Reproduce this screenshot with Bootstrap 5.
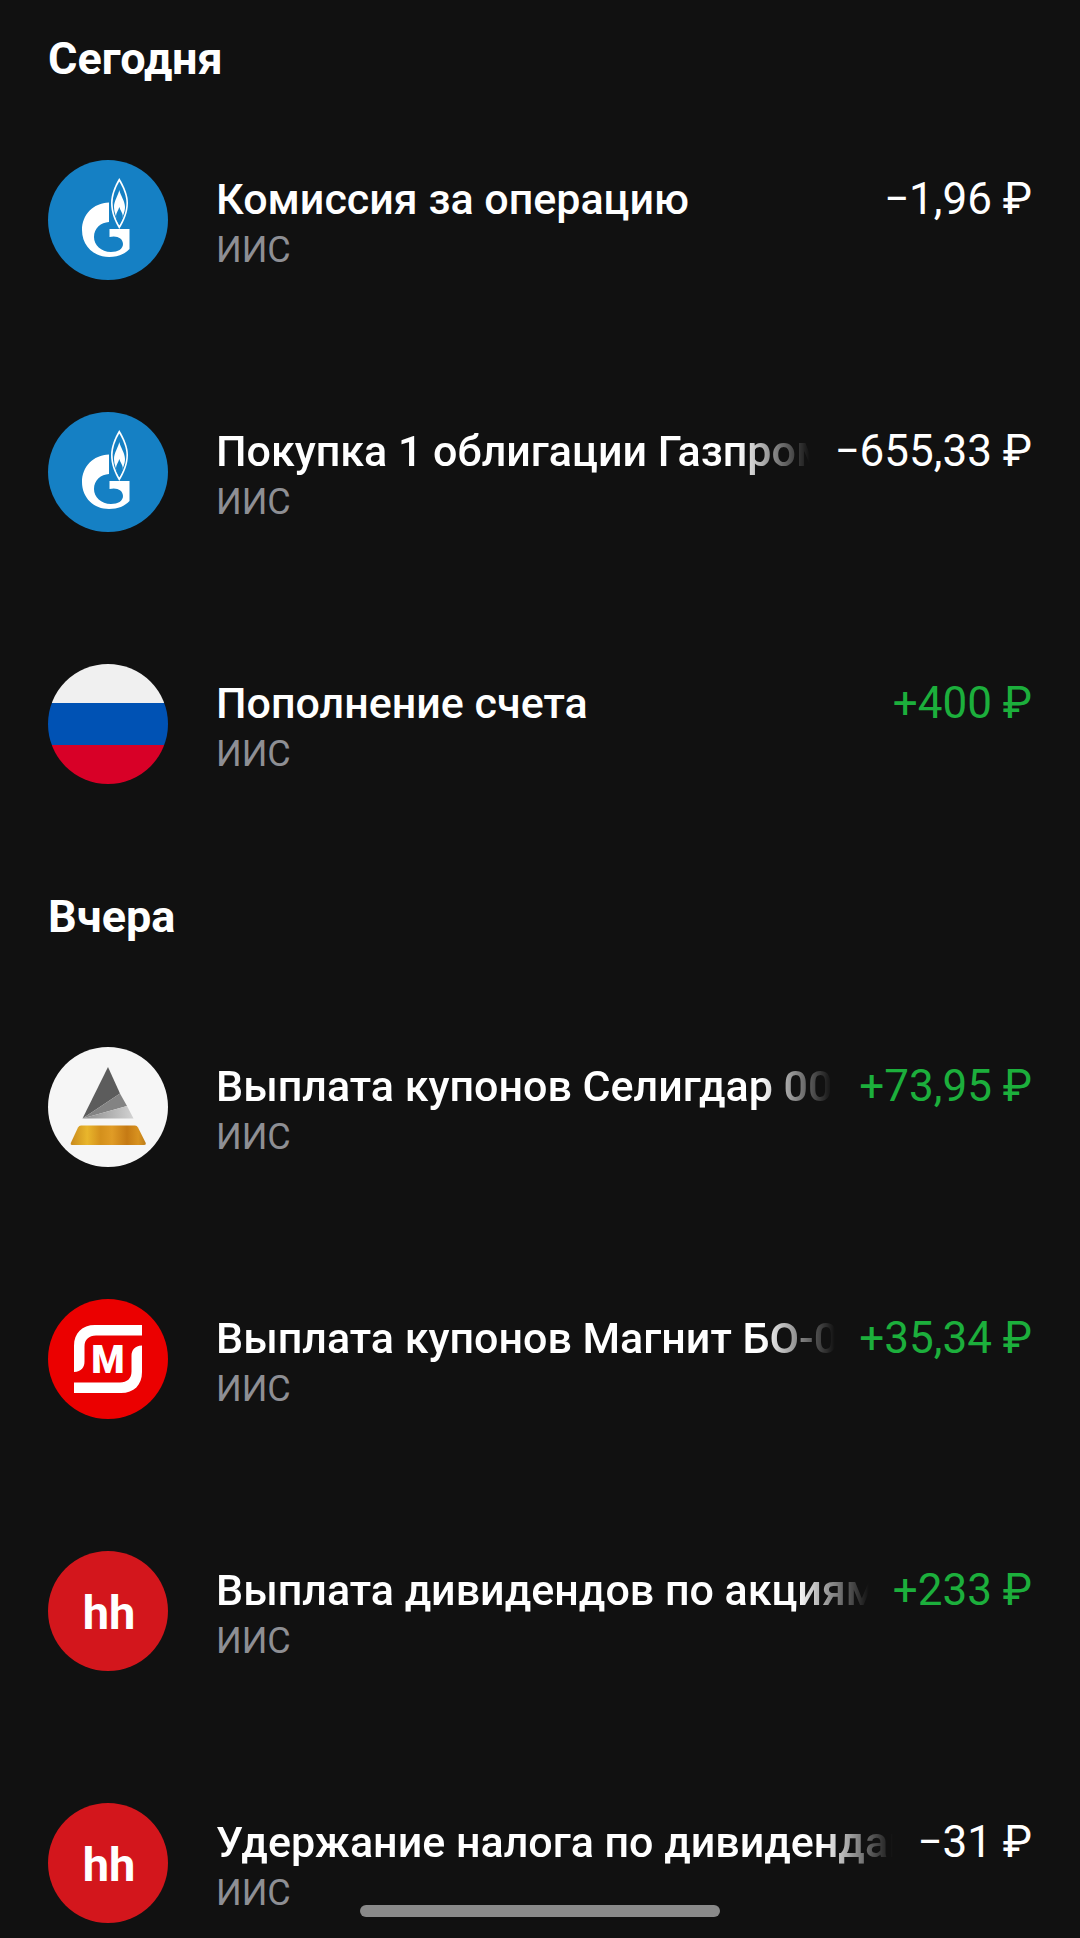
<!DOCTYPE html>
<html lang="ru" data-bs-theme="dark">
<head>
<meta charset="utf-8">
<meta name="viewport" content="width=device-width, initial-scale=1">
<title>Операции</title>
<link href="https://cdn.jsdelivr.net/npm/bootstrap@5.3.0/dist/css/bootstrap.min.css" rel="stylesheet">
<style>
body { background: #111; color: #fff; font-family: Roboto, "Noto Sans", sans-serif; }
.feed { padding: 0 48px; }
.day-title { font-size: 45px; line-height: 52px; font-weight: 700; padding: 41px 0 38px; }
.day-title-first { padding: 33px 0 9px; }
.operation { gap: 48px; padding: 66px 0; }
.operation-last { padding-bottom: 0; }
.logo { width: 120px; height: 120px; }
.info { padding-top: 13px; }
.op-line { gap: 24px; line-height: 52px; }
.op-name { font-size: 43px; font-weight: 500; min-width: 0; }
.op-name-cut { -webkit-mask-image: linear-gradient(to left, transparent, #000 72px); mask-image: linear-gradient(to left, transparent, #000 72px); }
.op-sum { font-size: 44px; }
.income { color: #1caf3c; }
.account { font-size: 36px; line-height: 50px; color: #8e8f94; }
.home-bar { width: 360px; height: 12px; background: #8a8a8a; bottom: 21px; }
</style>
<script src="https://cdn.jsdelivr.net/npm/bootstrap@5.3.0/dist/js/bootstrap.bundle.min.js" defer></script>
</head>
<body>
<svg class="d-none" xmlns="http://www.w3.org/2000/svg">
  <symbol id="gazprom" viewBox="0 0 120 120">
    <circle cx="60" cy="60" r="60" fill="#1580c4"/>
    <path fill="#fff" d="M61 42.500C45 43 34 55 34 70c0 16 12 27 27 27 9 0 16-3 20.500-8V69H61.500v8c7-2 13.500 1 13.500 7 0 5-5 8-12 8-10 0-17-7-17-15 0-9 7-14.500 15-15z"/>
    <path fill="#fff" d="M71.300 18C66 27 63 35 63 43c0 9 3 17 8.300 26C76.600 60 80 52 80 43c0-8-3.400-16-8.700-25z"/>
    <path fill="#1580c4" d="M71.300 21.500C67 29 64.600 36 64.600 43c0 8 2.400 15 6.700 22.500C75.600 58 78.400 51 78.400 43c0-7-2.800-14-7.100-21.500z"/>
    <path fill="#fff" d="M71.300 30c-1 5-5.300 11-5.300 17 0 5 2.300 11 5.300 16.500C74.300 58 77 52 77 47c0-6-4.700-12-5.700-17z"/>
    <path fill="#1580c4" d="M71.300 47c-.7 3-3.300 6-3.300 9 0 3 1.600 6 3.300 9 1.700-3 3.500-6 3.500-9 0-3-2.800-6-3.500-9z"/>
  </symbol>
  <symbol id="hh" viewBox="0 0 120 120">
    <circle cx="60" cy="60" r="60" fill="#d3161c"/>
    <text x="61" y="78" text-anchor="middle" font-size="47" font-weight="700" fill="#fff">hh</text>
  </symbol>
</svg>

<main class="feed">
  <section>
    <h2 class="day-title day-title-first m-0">Сегодня</h2>
    <ul class="list-unstyled m-0">
      <li class="operation d-flex align-items-start">
        <svg class="logo flex-shrink-0" aria-hidden="true"><use href="#gazprom"/></svg>
        <div class="info flex-fill overflow-hidden">
          <div class="op-line d-flex justify-content-between">
            <span class="op-name text-nowrap overflow-hidden">Комиссия за операцию</span>
            <span class="op-sum text-nowrap">−1,96 ₽</span>
          </div>
          <div class="account">ИИС</div>
        </div>
      </li>
      <li class="operation d-flex align-items-start">
        <svg class="logo flex-shrink-0" aria-hidden="true"><use href="#gazprom"/></svg>
        <div class="info flex-fill overflow-hidden">
          <div class="op-line d-flex justify-content-between">
            <span class="op-name op-name-cut text-nowrap overflow-hidden">Покупка 1 облигации Газпром</span>
            <span class="op-sum text-nowrap">−655,33 ₽</span>
          </div>
          <div class="account">ИИС</div>
        </div>
      </li>
      <li class="operation d-flex align-items-start">
        <svg class="logo flex-shrink-0 rounded-circle" viewBox="0 0 120 120" aria-hidden="true">
          <path fill="#f0f0f0" d="M0 0h120v39H0z"/><path fill="#0052b4" d="M0 39h120v42H0z"/><path fill="#d80027" d="M0 81h120v39H0z"/>
        </svg>
        <div class="info flex-fill overflow-hidden">
          <div class="op-line d-flex justify-content-between">
            <span class="op-name text-nowrap overflow-hidden">Пополнение счета</span>
            <span class="op-sum income text-nowrap">+400 ₽</span>
          </div>
          <div class="account">ИИС</div>
        </div>
      </li>
    </ul>
  </section>
  <section>
    <h2 class="day-title m-0">Вчера</h2>
    <ul class="list-unstyled m-0">
      <li class="operation d-flex align-items-start">
        <svg class="logo flex-shrink-0" viewBox="0 0 120 120" aria-hidden="true">
          <defs>
            <linearGradient id="gold">
              <stop offset="0" stop-color="#c98a1c"/><stop offset=".22" stop-color="#e9b62c"/><stop offset=".4" stop-color="#d4901c"/>
              <stop offset=".55" stop-color="#e09c26"/><stop offset=".75" stop-color="#c57a14"/><stop offset=".9" stop-color="#d8921f"/><stop offset="1" stop-color="#bd7d1a"/>
            </linearGradient>
            <linearGradient id="steel"><stop offset="0" stop-color="#8a8a8a"/><stop offset="1" stop-color="#d2d2d2"/></linearGradient>
          </defs>
          <circle cx="60" cy="60" r="60" fill="#f6f6f6"/>
          <path fill="#5c5c5c" d="M60 20 34.500 71.500 72 46.500z"/>
          <path fill="#838383" d="M72 46.500 34.500 71.500 79 59z"/>
          <path fill="url(#steel)" d="M79 59 34.500 71.500h51z"/>
          <path fill="url(#gold)" d="M33 78.500h54q2 0 3 2l7.500 15q1 2.500-1.500 2.500H24q-2 0-1-2.500l7-15q1-2 3-2z"/>
        </svg>
        <div class="info flex-fill overflow-hidden">
          <div class="op-line d-flex justify-content-between">
            <span class="op-name op-name-cut text-nowrap overflow-hidden">Выплата купонов Селигдар 00</span>
            <span class="op-sum income text-nowrap">+73,95 ₽</span>
          </div>
          <div class="account">ИИС</div>
        </div>
      </li>
      <li class="operation d-flex align-items-start">
        <svg class="logo flex-shrink-0" viewBox="0 0 120 120" aria-hidden="true">
          <circle cx="60" cy="60" r="60" fill="#eb0000"/>
          <path fill="#fff" d="M94 26v10.500H48c-7 0-11.500 4-11.500 11v15c0 6-3 10-10.500 10.500V47c0-13 8-21 21-21z"/>
          <path fill="#fff" d="M26 94V83.500h46c7 0 11.500-4 11.500-11V57c0-6 3-10 10.500-10.500V73c0 13-8 21-21 21z"/>
          <text x="60" y="74" text-anchor="middle" font-size="38" font-weight="900" fill="#fff">M</text>
        </svg>
        <div class="info flex-fill overflow-hidden">
          <div class="op-line d-flex justify-content-between">
            <span class="op-name op-name-cut text-nowrap overflow-hidden">Выплата купонов Магнит БО-0</span>
            <span class="op-sum income text-nowrap">+35,34 ₽</span>
          </div>
          <div class="account">ИИС</div>
        </div>
      </li>
      <li class="operation d-flex align-items-start">
        <svg class="logo flex-shrink-0" aria-hidden="true"><use href="#hh"/></svg>
        <div class="info flex-fill overflow-hidden">
          <div class="op-line d-flex justify-content-between">
            <span class="op-name op-name-cut text-nowrap overflow-hidden">Выплата дивидендов по акциям</span>
            <span class="op-sum income text-nowrap">+233 ₽</span>
          </div>
          <div class="account">ИИС</div>
        </div>
      </li>
      <li class="operation operation-last d-flex align-items-start">
        <svg class="logo flex-shrink-0" aria-hidden="true"><use href="#hh"/></svg>
        <div class="info flex-fill overflow-hidden">
          <div class="op-line d-flex justify-content-between">
            <span class="op-name op-name-cut text-nowrap overflow-hidden">Удержание налога по дивидендам</span>
            <span class="op-sum text-nowrap">−31 ₽</span>
          </div>
          <div class="account">ИИС</div>
        </div>
      </li>
    </ul>
  </section>
</main>
<div class="home-bar position-fixed start-50 translate-middle-x rounded-pill"></div>
</body>
</html>
